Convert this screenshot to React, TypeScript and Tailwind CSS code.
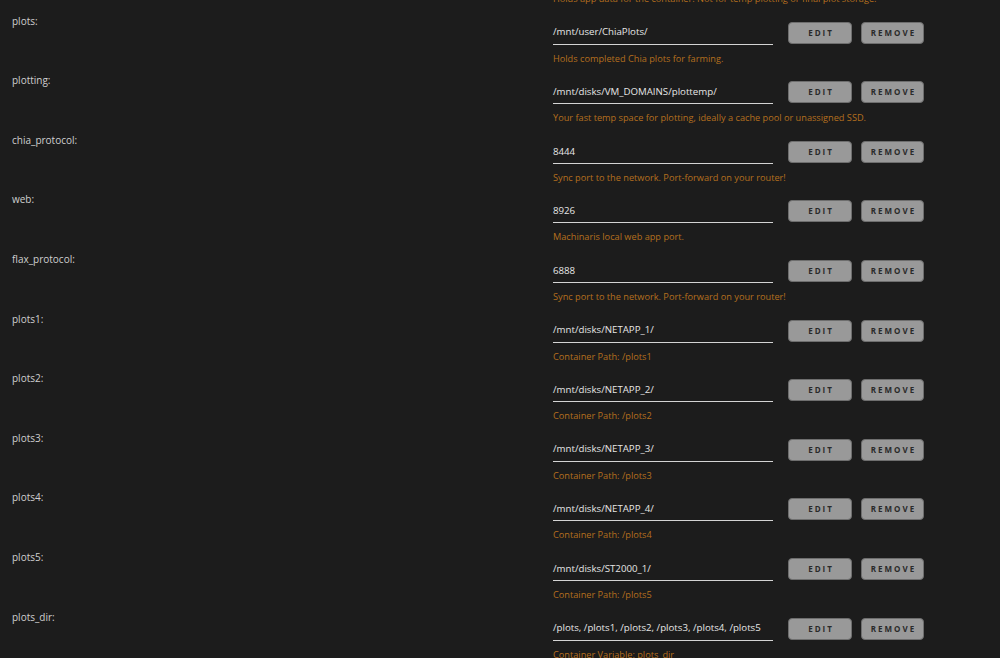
type Setting = {
  name: string;
  value: string;
  help: string;
};

const settings: Setting[] = [
  {
    name: "appdata:",
    value: "/mnt/user/appdata/machinaris/",
    help: "Holds app data for the container. Not for temp plotting or final plot storage.",
  },
  {
    name: "plots:",
    value: "/mnt/user/ChiaPlots/",
    help: "Holds completed Chia plots for farming.",
  },
  {
    name: "plotting:",
    value: "/mnt/disks/VM_DOMAINS/plottemp/",
    help: "Your fast temp space for plotting, ideally a cache pool or unassigned SSD.",
  },
  {
    name: "chia_protocol:",
    value: "8444",
    help: "Sync port to the network. Port-forward on your router!",
  },
  { name: "web:", value: "8926", help: "Machinaris local web app port." },
  {
    name: "flax_protocol:",
    value: "6888",
    help: "Sync port to the network. Port-forward on your router!",
  },
  { name: "plots1:", value: "/mnt/disks/NETAPP_1/", help: "Container Path: /plots1" },
  { name: "plots2:", value: "/mnt/disks/NETAPP_2/", help: "Container Path: /plots2" },
  { name: "plots3:", value: "/mnt/disks/NETAPP_3/", help: "Container Path: /plots3" },
  { name: "plots4:", value: "/mnt/disks/NETAPP_4/", help: "Container Path: /plots4" },
  { name: "plots5:", value: "/mnt/disks/ST2000_1/", help: "Container Path: /plots5" },
  {
    name: "plots_dir:",
    value: "/plots, /plots1, /plots2, /plots3, /plots4, /plots5",
    help: "Container Variable: plots_dir",
  },
];

const SmallButton = ({ label, width }: { label: string; width: string }) => (
  <button
    className={`${width} h-[22px] mb-[1px] flex items-center justify-center rounded-[4px] border border-[#6e6e6e] bg-[#999999] text-[8px] font-bold tracking-[2px] text-[#2a2a2a] pl-[2px]`}
  >
    {label}
  </button>
);

const SettingRow = ({ item }: { item: Setting }) => (
  <div className="flex h-[59.6px]">
    <div className="w-[553px] shrink-0 pl-3 pt-[3px] text-[10px] leading-[14px] text-[#cfcfcf]">
      {item.name}
    </div>
    <div className="flex flex-col">
      <div className="flex items-end mt-[10px]">
        <div className="w-[220px] h-[24px] flex items-center border-b-[1.5px] border-[#d4d4d4] text-[9.7px] text-[#e6e6e6] pt-[1px] whitespace-nowrap">
          {item.value}
        </div>
        <div className="ml-[15px]">
          <SmallButton label="EDIT" width="w-[64px]" />
        </div>
        <div className="ml-[9px]">
          <SmallButton label="REMOVE" width="w-[63px]" />
        </div>
      </div>
      <div className="mt-[7px] text-[9.2px] leading-[14px] text-[#b46f1e] whitespace-nowrap">
        {item.help}
      </div>
    </div>
  </div>
);

export default function App() {
  return (
    <div
      className="w-[1000px] h-[658px] overflow-hidden bg-[#1c1c1c]"
      style={{ fontFamily: '"Open Sans", "DejaVu Sans", sans-serif' }}
    >
      <div className="mt-[-49px]">
        {settings.map((item) => (
          <SettingRow key={item.name} item={item} />
        ))}
      </div>
    </div>
  );
}
